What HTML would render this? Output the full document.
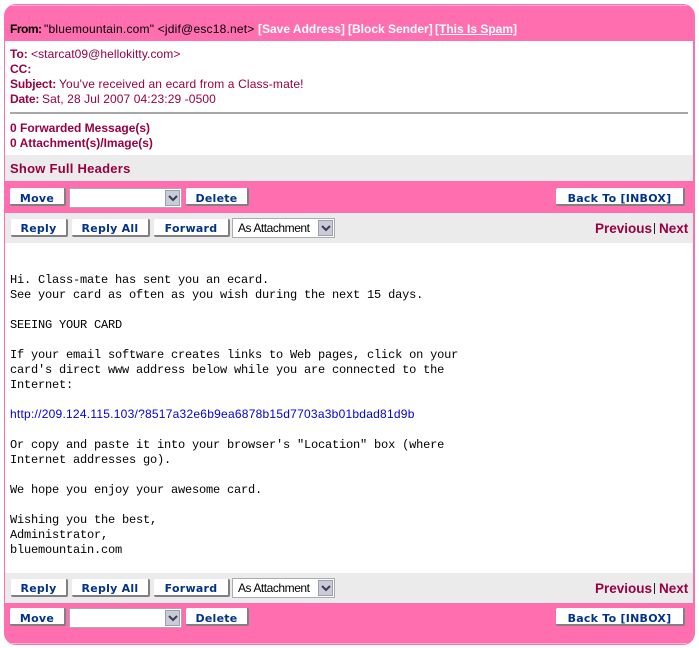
<!DOCTYPE html>
<html><head><meta charset="utf-8"><style>
html,body{margin:0;padding:0;background:#fff}
body{width:699px;height:648px;position:relative;overflow:hidden;font-family:"Liberation Sans",sans-serif;font-size:12px}
.a{position:absolute}
.t{position:absolute;white-space:nowrap;line-height:15px}
.m{color:#990044}
b.m,.b{font-weight:bold}
.btn{position:absolute;height:16px;background:#fff;border-right:2px solid #808080;border-bottom:2px solid #808080;border-radius:2px;color:#003388;font:bold 11px/19px "DejaVu Sans",sans-serif;letter-spacing:.25px;text-align:center;white-space:nowrap}
.up{line-height:21px}
.sel{position:absolute;height:18px;width:111px;background:#fff;border:1px solid #a5acb2;box-sizing:content-box}
.sel span{position:absolute;left:5px;top:2px;font-size:12px;line-height:15px;color:#000;white-space:nowrap;letter-spacing:-.45px}
.arr{position:absolute;right:1px;top:1px;width:15px;height:16px;background:#c9cbdc;border:1px solid #9aa0ae;box-sizing:border-box}
.arr svg{position:absolute;left:2px;top:3px}
.nav{position:absolute;color:#990044;font-weight:bold;font-size:13.5px;line-height:16px;white-space:nowrap;letter-spacing:0}
pre{position:absolute;margin:0;left:10px;top:273px;font:12px/15px "Liberation Mono",monospace;letter-spacing:-.2px;color:#000}
pre a{font:12px/1px "Liberation Sans",sans-serif;letter-spacing:.24px;color:#0000dd;text-decoration:none}
</style></head><body>
<div class="a" style="left:4px;top:4px;width:691px;height:641px;background:#ff6fb0;border-radius:12px"></div>
<div class="a" style="left:11px;top:5px;width:676px;height:1px;background:#ffb0d4"></div>
<div class="a" style="left:11px;top:643px;width:676px;height:1px;background:#ffb0d4"></div>
<div class="a" style="left:5px;top:41px;width:688px;height:562px;background:#fff"></div>
<div class="a" style="left:5px;top:155px;width:688px;height:26px;background:#ebebeb"></div>
<div class="a" style="left:5px;top:181px;width:688px;height:32px;background:#ff6fb0"></div>
<div class="a" style="left:5px;top:213px;width:688px;height:30px;background:#ebebeb"></div>
<div class="a" style="left:5px;top:573px;width:688px;height:30px;background:#ebebeb"></div>

<div class="t b" style="left:10px;top:22px;letter-spacing:-.5px">From:</div>
<div class="t" style="left:44px;top:22px;letter-spacing:.2px">"bluemountain.com" &lt;jdif@esc18.net&gt;</div>
<div class="t b" style="left:258px;top:22px;color:#fff">[Save Address]</div>
<div class="t b" style="left:348px;top:22px;color:#fff">[Block Sender]</div>
<div class="t b" style="left:435px;top:22px;color:#fff;text-decoration:underline">[This Is Spam]</div>

<div class="t m b" style="left:10px;top:47px">To:</div>
<div class="t m" style="left:31px;top:47px;letter-spacing:.08px">&lt;starcat09@hellokitty.com&gt;</div>
<div class="t m b" style="left:10px;top:62px">CC:</div>
<div class="t m b" style="left:10px;top:77px;letter-spacing:-.15px">Subject:</div>
<div class="t m" style="left:59px;top:77px;letter-spacing:.14px">You've received an ecard from a Class-mate!</div>
<div class="t m b" style="left:10px;top:92px;letter-spacing:-.15px">Date:</div>
<div class="t m" style="left:42px;top:92px;letter-spacing:.1px">Sat, 28 Jul 2007 04:23:29 -0500</div>
<div class="a" style="left:10px;top:112px;width:678px;height:2px;background:#a8a8a8"></div>
<div class="t m b" style="left:10px;top:121px">0 Forwarded Message(s)</div>
<div class="t m b" style="left:10px;top:136px">0 Attachment(s)/Image(s)</div>
<div class="t m b" style="left:10px;top:161px;font-size:13px;letter-spacing:.25px">Show Full Headers</div>

<div class="btn up" style="left:10px;top:188px;width:54px">Move</div>
<div class="sel" style="left:69px;top:188px"><div class="arr"><svg width="10" height="8"><path d="M1 2l4 4 4-4" fill="none" stroke="#3a3a48" stroke-width="2"/></svg></div></div>
<div class="btn up" style="left:186px;top:188px;width:61px">Delete</div>
<div class="btn up" style="left:556px;top:188px;width:127px">Back To [INBOX]</div>

<div class="btn" style="left:11px;top:219px;width:55px">Reply</div>
<div class="btn" style="left:72px;top:219px;width:76px">Reply All</div>
<div class="btn" style="left:154px;top:219px;width:74px">Forward</div>
<div class="sel" style="left:232px;top:218px;width:101px"><span>As Attachment</span><div class="arr"><svg width="10" height="8"><path d="M1 2l4 4 4-4" fill="none" stroke="#3a3a48" stroke-width="2"/></svg></div></div>
<div class="nav" style="left:595px;top:221px">Previous</div><div class="a" style="left:654px;top:223px;width:1px;height:11px;background:#222"></div><div class="nav" style="left:659px;top:221px">Next</div>

<pre>Hi. Class-mate has sent you an ecard.
See your card as often as you wish during the next 15 days.

SEEING YOUR CARD

If your email software creates links to Web pages, click on your
card's direct www address below while you are connected to the
Internet:

<a>http://209.124.115.103/?8517a32e6b9ea6878b15d7703a3b01bdad81d9b</a>

Or copy and paste it into your browser's "Location" box (where
Internet addresses go).

We hope you enjoy your awesome card.

Wishing you the best,
Administrator,
bluemountain.com</pre>

<div class="btn" style="left:11px;top:579px;width:55px">Reply</div>
<div class="btn" style="left:72px;top:579px;width:76px">Reply All</div>
<div class="btn" style="left:154px;top:579px;width:74px">Forward</div>
<div class="sel" style="left:232px;top:578px;width:101px"><span>As Attachment</span><div class="arr"><svg width="10" height="8"><path d="M1 2l4 4 4-4" fill="none" stroke="#3a3a48" stroke-width="2"/></svg></div></div>
<div class="nav" style="left:595px;top:581px">Previous</div><div class="a" style="left:654px;top:583px;width:1px;height:11px;background:#222"></div><div class="nav" style="left:659px;top:581px">Next</div>

<div class="btn up" style="left:10px;top:608px;width:54px">Move</div>
<div class="sel" style="left:69px;top:608px"><div class="arr"><svg width="10" height="8"><path d="M1 2l4 4 4-4" fill="none" stroke="#3a3a48" stroke-width="2"/></svg></div></div>
<div class="btn up" style="left:186px;top:608px;width:61px">Delete</div>
<div class="btn up" style="left:556px;top:608px;width:127px">Back To [INBOX]</div>
</body></html>
